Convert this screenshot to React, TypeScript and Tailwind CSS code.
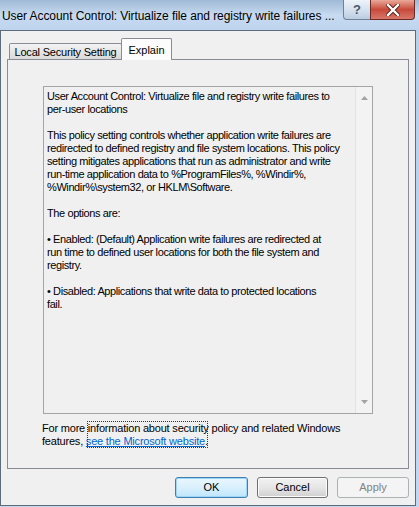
import React from "react";

const bodyFont = { fontFamily: '"Liberation Sans", Arial, sans-serif' };

function Line({ children }: { children?: React.ReactNode }) {
  return <div className="h-[13px] whitespace-nowrap leading-[13px]">{children}</div>;
}

export default function App() {
  return (
    <div
      className="relative flex h-[507px] w-[419px] flex-col overflow-hidden bg-gradient-to-b from-[#b6cfea] to-[#c3d8f0] text-black"
      style={bodyFont}
    >
      {/* Title bar */}
      <div className="flex h-[30px] shrink-0 items-start justify-between bg-gradient-to-b from-[#9fb9d6] via-[#c7dbf1] to-[#bed4ee] pr-[4px]">
        <div className="mt-[9px] whitespace-nowrap pl-[2px] text-[12px] leading-[14px] tracking-[-0.08px] text-black">
          User Account Control: Virtualize file and registry write failures ...
        </div>
        <div className="flex">
          <div className="flex h-[20px] w-[28px] items-center justify-center rounded-bl-[4px] border border-t-0 border-[#6f8196] bg-gradient-to-b from-[#eef3f9] via-[#d6e2ef] to-[#bccde2] text-[13px] font-bold leading-none text-[#4a5868]">
            ?
          </div>
          <div className="-ml-px flex h-[20px] w-[45px] items-center justify-center rounded-br-[4px] border border-t-0 border-[#6b2b24] bg-gradient-to-b from-[#e9a899] via-[#c7493b] to-[#d7776a]">
            <svg width="14" height="12" viewBox="0 0 14 12">
              <path d="M2 1 L12 11 M12 1 L2 11" stroke="#5a1d17" strokeWidth="4.2" strokeLinecap="square" />
              <path d="M2 1 L12 11 M12 1 L2 11" stroke="#ffffff" strokeWidth="2.4" strokeLinecap="square" />
            </svg>
          </div>
        </div>
      </div>

      {/* Window body */}
      <div className="flex h-[476px] shrink-0 pr-[3px]">
        <div className="flex flex-1 flex-col border border-[#5d6c7d] bg-[#f0f0f0] px-[6px]">
          {/* Tabs */}
          <div className="mt-[7px] flex h-[21px] items-end pl-[2px] text-[11px]">
            <div className="flex h-[16px] w-[113px] items-center justify-center rounded-t-[2px] border border-b-0 border-[#898c95] bg-gradient-to-b from-[#f3f3f3] via-[#e6e6e6] to-[#d9d9d9] pt-[1px] tracking-[-0.2px]">
              Local Security Setting
            </div>
            <div className="relative z-10 -mb-px -ml-px flex h-[22px] w-[51px] items-start justify-center rounded-t-[2px] border border-b-0 border-[#898c95] bg-[#fcfcfc] pt-[3px]">
              Explain
            </div>
          </div>

          {/* Panel */}
          <div className="h-[410px] border border-[#898c95] bg-[#f0f0f0]">
            <div className="flex h-full flex-col pl-[35px] pt-[26px]">
              {/* Text box */}
              <div className="flex h-[328px] w-[330px] border border-[#a5a5a5] bg-[#f0f0f0]">
                <div className="flex-1 pl-[3px] pt-[3px] text-[11px] tracking-[-0.4px]">
                  <Line>User Account Control: Virtualize file and registry write failures to</Line>
                  <Line>per-user locations</Line>
                  <Line />
                  <Line>This policy setting controls whether application write failures are</Line>
                  <Line>redirected to defined registry and file system locations. This policy</Line>
                  <Line>setting mitigates applications that run as administrator and write</Line>
                  <Line>run-time application data to %ProgramFiles%, %Windir%,</Line>
                  <Line>%Windir%\system32, or HKLM\Software.</Line>
                  <Line />
                  <Line>The options are:</Line>
                  <Line />
                  <Line>• Enabled: (Default) Application write failures are redirected at</Line>
                  <Line>run time to defined user locations for both the file system and</Line>
                  <Line>registry.</Line>
                  <Line />
                  <Line>• Disabled: Applications that write data to protected locations</Line>
                  <Line>fail.</Line>
                </div>
                {/* Scrollbar (disabled) */}
                <div className="flex w-[17px] flex-col items-center justify-between border-l border-[#e3e3e3] bg-[#f3f3f3] py-[9px]">
                  <svg width="7" height="4" viewBox="0 0 7 4">
                    <path d="M0 4 L3.5 0 L7 4 Z" fill="#a3a3a3" />
                  </svg>
                  <svg width="7" height="4" viewBox="0 0 7 4">
                    <path d="M0 0 L7 0 L3.5 4 Z" fill="#a3a3a3" />
                  </svg>
                </div>
              </div>

              {/* Footer text */}
              <div className="relative -ml-[1px] mt-[8px] text-[11px] tracking-[-0.2px]">
                <Line>For more information about security policy and related Windows</Line>
                <Line>
                  features, <span className="text-[#0066cc] underline">see the Microsoft website</span>.
                </Line>
                <div className="pointer-events-none absolute left-[45px] top-[-1px] h-[27px] w-[121px] border border-dotted border-[#333]" />
              </div>
            </div>
          </div>

          {/* Buttons */}
          <div className="mt-[8px] flex justify-end gap-[9px] text-[11px]">
            <div className="flex h-[21px] w-[73px] items-center justify-center rounded-[3px] border border-[#3c7fb1] bg-gradient-to-b from-[#eaf6fd] via-[#d9f0fc] to-[#bee6fd] shadow-[inset_0_0_0_1px_#9fd6f7]">
              OK
            </div>
            <div className="flex h-[21px] w-[71px] items-center justify-center rounded-[3px] border border-[#707070] bg-gradient-to-b from-[#f2f2f2] via-[#e6e6e6] to-[#d0d0d0] shadow-[inset_0_0_0_1px_#fcfcfc]">
              Cancel
            </div>
            <div className="flex h-[21px] w-[72px] items-center justify-center rounded-[3px] border border-[#adb2b5] bg-[#f4f4f4] text-[#838383]">
              Apply
            </div>
          </div>
        </div>
      </div>
    </div>
  );
}
